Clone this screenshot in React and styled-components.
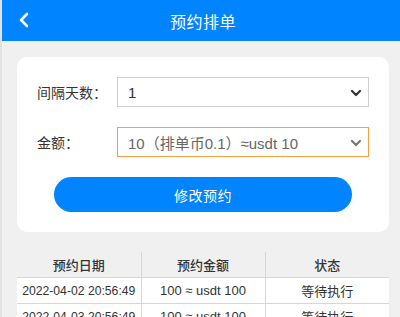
import React, { useState } from 'react';
import styled, { createGlobalStyle } from 'styled-components';

const GlobalStyle = createGlobalStyle`
  html, body {
    margin: 0;
    padding: 0;
    background: #f0f0f0;
    overflow: hidden;
  }
  body {
    font-family: "Liberation Sans", "Noto Sans CJK SC", sans-serif;
    color: #333;
  }
`;

const Page = styled.div`
  width: 402px;
  min-height: 317px;
  border-left: 2px solid #e2e2e2;
  background: #f0f0f0;
`;

const Header = styled.header`
  position: relative;
  height: 41px;
  background: #0084ff;
  display: flex;
  align-items: center;
  justify-content: center;
`;

const Title = styled.h1`
  margin: 0;
  font-size: 16px;
  font-weight: normal;
  color: #fff;
  letter-spacing: 0.5px;
`;

const BackButton = styled.button`
  position: absolute;
  left: 13px;
  top: 11px;
  width: 18px;
  height: 18px;
  padding: 0;
  border: 0;
  background: none;
  display: flex;
  align-items: center;
  justify-content: center;
`;

const Card = styled.section`
  margin: 16px 15px 0;
  padding: 20px;
  background: #fff;
  border-radius: 10px;
  display: flex;
  flex-direction: column;
  gap: 20px;
`;

const Row = styled.div`
  display: flex;
  align-items: center;
`;

const Label = styled.label`
  width: 80px;
  font-size: 14px;
  color: #333;
`;

const SelectWrap = styled.div`
  position: relative;
  flex: 1;
  height: 30px;
  box-sizing: border-box;
  border: 1px solid ${({ $active }) => ($active ? '#f5a144' : '#cfcfcf')};
  display: flex;
  align-items: center;
  padding: 0 10px;
  font-size: 15px;
  color: ${({ $active }) => ($active ? '#666' : '#333')};
`;

const Chevron = styled.svg`
  position: absolute;
  right: 6px;
  top: 11px;
`;

const SubmitButton = styled.button`
  align-self: center;
  width: 298px;
  height: 35px;
  border: 0;
  border-radius: 18px;
  background: #0084ff;
  color: #fff;
  font-family: inherit;
  font-size: 14px;
  letter-spacing: 0.5px;
`;

const Table = styled.table`
  margin: 20px 15px 0;
  width: 372px;
  border-collapse: collapse;
  table-layout: fixed;
`;

const Th = styled.th`
  height: 25px;
  padding: 0;
  font-size: 13px;
  font-weight: 500;
  color: #333;
  border-bottom: 1px solid #d6d6df;
  & + & {
    border-left: 1px solid #d6d6df;
  }
`;

const Td = styled.td`
  height: 25px;
  padding: 0;
  background: #fff;
  text-align: center;
  font-size: 13px;
  color: #333;
  white-space: nowrap;
  border-bottom: 1px solid #d6d6df;
  & + & {
    border-left: 1px solid #d6d6df;
  }
`;

const DateText = styled.span`
  font-size: 12.2px;
`;

const Select = ({ value, active }) => (
  <SelectWrap $active={active}>
    {value}
    <Chevron width="12" height="8" viewBox="0 0 12 8">
      <path
        d="M2 2 L6 6 L10 2"
        fill="none"
        stroke={active ? '#777' : '#333'}
        strokeWidth="2.2"
        strokeLinecap="round"
        strokeLinejoin="round"
      />
    </Chevron>
  </SelectWrap>
);

const rows = [
  { date: '2022-04-02 20:56:49', amount: '100 ≈ usdt 100', status: '等待执行' },
  { date: '2022-04-03 20:56:49', amount: '100 ≈ usdt 100', status: '等待执行' },
];

export default function App() {
  const [days] = useState('1');
  return (
    <Page>
      <GlobalStyle />
      <Header>
        <BackButton aria-label="back">
          <svg width="12" height="16" viewBox="0 0 12 16">
            <path
              d="M9 2 L3 8 L9 14"
              fill="none"
              stroke="#fff"
              strokeWidth="2.6"
              strokeLinecap="round"
              strokeLinejoin="round"
            />
          </svg>
        </BackButton>
        <Title>预约排单</Title>
      </Header>
      <Card>
        <Row>
          <Label>间隔天数：</Label>
          <Select value={days} />
        </Row>
        <Row>
          <Label>金额：</Label>
          <Select value="10（排单币0.1）≈usdt 10" active />
        </Row>
        <SubmitButton>修改预约</SubmitButton>
      </Card>
      <Table>
        <thead>
          <tr>
            <Th>预约日期</Th>
            <Th>预约金额</Th>
            <Th>状态</Th>
          </tr>
        </thead>
        <tbody>
          {rows.map((r) => (
            <tr key={r.date}>
              <Td><DateText>{r.date}</DateText></Td>
              <Td>{r.amount}</Td>
              <Td>{r.status}</Td>
            </tr>
          ))}
        </tbody>
      </Table>
    </Page>
  );
}
